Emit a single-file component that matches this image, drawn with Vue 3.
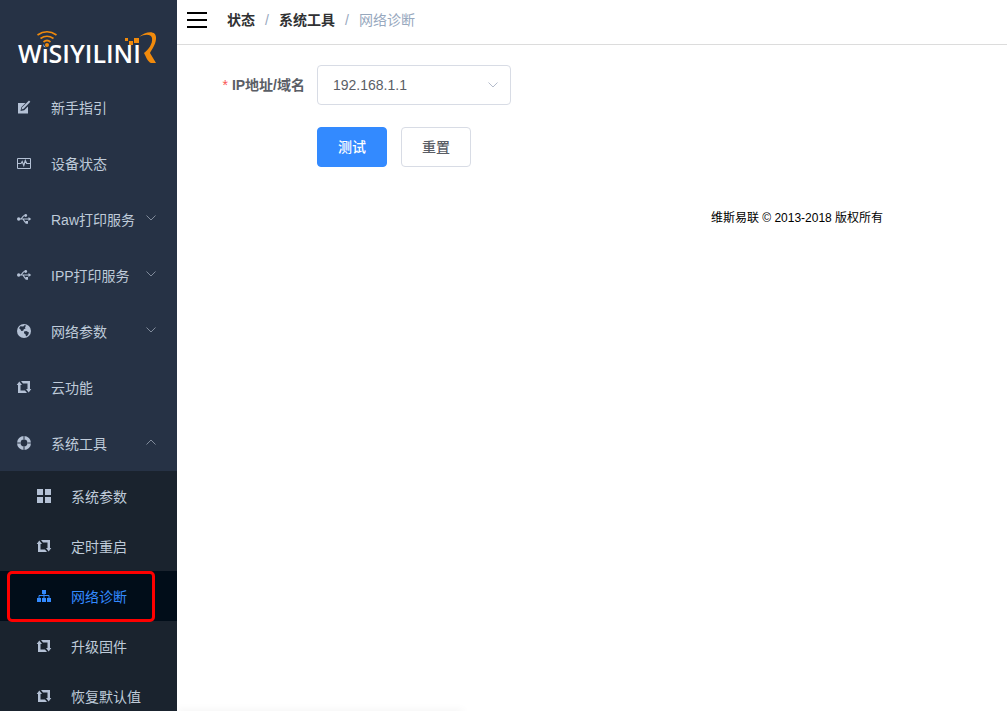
<script setup>
import { ref } from 'vue'

const menu = [
  { label: '新手指引', icon: 'edit' },
  { label: '设备状态', icon: 'monitor' },
  { label: 'Raw打印服务', icon: 'usb', arrow: 'down' },
  { label: 'IPP打印服务', icon: 'usb', arrow: 'down' },
  { label: '网络参数', icon: 'globe', arrow: 'down' },
  { label: '云功能', icon: 'loop' },
  {
    label: '系统工具',
    icon: 'ring',
    arrow: 'up',
    children: [
      { label: '系统参数', icon: 'grid' },
      { label: '定时重启', icon: 'loop' },
      { label: '网络诊断', icon: 'tree', active: true },
      { label: '升级固件', icon: 'loop' },
      { label: '恢复默认值', icon: 'loop' }
    ]
  }
]

const icons = {
  edit: '<path fill="currentColor" d="M1 3h7.500L4.300 7.300 3.500 11l3.700-.8L11 6.400V13.500H1z"/><path fill="currentColor" d="M12 .5l1.300 1.300-6.600 7-2.200.7.700-2.200z"/>',
  monitor: '<path fill="none" stroke="currentColor" stroke-width="1" d="M.5 2.500h13v10H.5z"/><path fill="none" stroke="currentColor" stroke-width="1.200" d="M1 7.500h3l1.200-2 1.600 4 1.500-5 1.400 3H13"/>',
  usb: '<circle cx="1.700" cy="7" r="1.700" fill="currentColor"/><path fill="none" stroke="currentColor" stroke-width="1.200" d="M2 7h10M3.500 7c1.700 0 1.800-3.500 4.300-3.500M5.500 7c1.500 0 1.500 3.500 3.500 3.500"/><path fill="currentColor" d="M11.500 5L14.200 7l-2.700 2zM8.500 9H11v2.700H8.500z"/><circle cx="8.700" cy="3.500" r="1.400" fill="currentColor"/>',
  globe: '<circle cx="7" cy="7" r="7" fill="currentColor"/><path class="cut" d="M3.300 2.300l3 .2 1-1.300 1.900.4L8 3.300l.5 1.200-1.700.7-.6 1.500-1.900.2L3.200 5 2 4.200zM7 7.600l2.300-.6 2.700 1.400-.7 2-1.500 1.900-.9-.2-.4-1.900L7 9.300z"/>',
  loop: '<path fill="currentColor" d="M4 1h9v8h1.300l-2.600 3.500L9 9h1.500V3.500H6zM10 13H1V5H-.3l2.600-3.500L5 5H3.500v5.500H8z"/>',
  ring: '<circle cx="7" cy="7" r="5.200" fill="none" stroke="currentColor" stroke-width="3.600"/><path class="slit" d="M7 0v3.500M7 10.500v4M0 7h3.500M10.500 7h4"/>',
  grid: '<path fill="currentColor" d="M0 0h6v6H0zM8 0h6v6H8zM0 8h6v6H0zM8 8h6v6H8z"/>',
  tree: '<path fill="currentColor" d="M5 1h4v4H5zM0 9h4v4H0zM5 9h4v4H5zM10 9h4v4h-4z"/><path fill="none" stroke="currentColor" d="M7 5v4M2 9V6.500h10V9"/>'
}

const address = ref('192.168.1.1')
</script>

<template>
  <div class="app">
    <aside class="side">
      <svg class="logo" viewBox="0 0 177 79" role="img" aria-label="WiSIYILINK">
        <text class="word" x="18" y="63">WiSIYILINI</text>
        <circle cx="47" cy="44.500" r="3" fill="#263245" />
        <g fill="none" stroke="#f08a0c" stroke-width="1.700">
          <path d="M37.500 35q9.500-6.500 19 0M40.500 38.500q6.500-4.500 13 0M43.500 42q3.500-3 7 0" />
        </g>
        <circle cx="47" cy="45" r="2" fill="#f08a0c" />
        <path fill="#f08a0c" d="M125 38h3v3h-3zM129 41h4v4h-4zM134 38h5v5h-5zM139 37C146 31 157 30 156 39c-.5 6-4 10-6 14l6 10h-5c-3-1-5-6-7-10 4-3 9-9 8-15-1-4-7-4-13-1z" />
      </svg>
      <nav>
        <ul>
          <li v-for="item in menu" :key="item.label">
            <a href="#" class="item">
              <svg class="icon" viewBox="0 0 14 14" aria-hidden="true" v-html="icons[item.icon]"></svg>
              <span>{{ item.label }}</span>
              <svg v-if="item.arrow" class="arrow" :class="item.arrow" viewBox="0 0 10 6" aria-hidden="true">
                <path d="M.5.500L5 5 9.500.500" />
              </svg>
            </a>
            <ul v-if="item.children" class="sub">
              <li v-for="child in item.children" :key="child.label">
                <a href="#" class="item" :class="{ active: child.active }">
                  <svg class="icon" viewBox="0 0 14 14" aria-hidden="true" v-html="icons[child.icon]"></svg>
                  <span>{{ child.label }}</span>
                </a>
              </li>
            </ul>
          </li>
        </ul>
      </nav>
    </aside>

    <div class="content">
      <header>
        <button class="toggle" type="button" aria-label="菜单"><i></i><i></i><i></i></button>
        <nav class="crumbs">
          <a href="#">状态</a><b>/</b><a href="#">系统工具</a><b>/</b><span>网络诊断</span>
        </nav>
      </header>
      <main>
        <form @submit.prevent>
          <label for="address"><em>*</em>IP地址/域名</label>
          <div class="field">
            <select id="address" v-model="address">
              <option>192.168.1.1</option>
            </select>
            <svg class="arrow" viewBox="0 0 10 6" aria-hidden="true"><path d="M.5.500L5 5 9.500.500" /></svg>
          </div>
          <div class="actions">
            <button type="submit" class="primary">测试</button>
            <button type="reset">重置</button>
          </div>
        </form>
      </main>
      <footer>维斯易联 © 2013-2018 版权所有</footer>
    </div>
    <div class="edge"></div>
  </div>
</template>

<style>
body {
  margin: 0;
  overflow: hidden;
}
.icon .cut {
  fill: #263245;
}
.icon .slit {
  stroke: #263245;
  stroke-width: 1;
}
</style>

<style scoped>
.app {
  display: flex;
  height: 100vh;
  overflow: hidden;
  background: #fff;
  font: 14px/20px "Liberation Sans", "Noto Sans CJK SC", sans-serif;
}
.side {
  flex: 0 0 177px;
  overflow: hidden;
  background: #263245;
}
.logo {
  display: block;
  width: 177px;
  height: 79px;
}
.word {
  font: 600 25px "Open Sans", sans-serif;
  fill: #fff;
}
ul {
  margin: 0;
  padding: 0;
  list-style: none;
}
.item {
  position: relative;
  display: flex;
  align-items: center;
  height: 56px;
  padding: 0 21px 0 17px;
  color: #bfcbd9;
  text-decoration: none;
  white-space: nowrap;
}
.item span {
  padding-top: 2px;
}
.icon {
  flex: none;
  width: 14px;
  height: 14px;
  margin-right: 20px;
  overflow: visible;
  color: #b4c1d5;
}
.arrow {
  flex: none;
  width: 10px;
  height: 6px;
  margin-left: auto;
  fill: none;
  stroke: #808b9b;
}
.item .arrow {
  margin-bottom: 2px;
}
.arrow.up {
  transform: rotate(180deg);
}
.sub {
  background: #1a232e;
}
.sub .item {
  height: 50px;
  padding-left: 37px;
}
.sub .active {
  background: #010d19;
  color: #338aff;
}
.active .icon {
  color: #338aff;
}
.active::after {
  content: "";
  position: absolute;
  inset: 0 22px -1px 7px;
  border: 3px solid #fe0000;
  border-radius: 5px;
  z-index: 1;
}
.content {
  flex: 1;
  min-width: 0;
}
header {
  display: flex;
  align-items: flex-start;
  gap: 20px;
  height: 44px;
  padding: 0 10px;
  border-bottom: 1px solid #dcdcdc;
}
.toggle {
  display: flex;
  flex-direction: column;
  justify-content: center;
  gap: 5px;
  width: 20px;
  height: 40px;
  padding: 0;
  border: 0;
  background: none;
}
.toggle i {
  height: 2px;
  background: #000;
}
.crumbs {
  display: flex;
  line-height: 40px;
  color: #97a8be;
}
.crumbs a {
  color: #303133;
  font-weight: bold;
  text-decoration: none;
}
.crumbs b {
  width: 4px;
  margin: 0 10px;
  font-weight: normal;
}
form {
  display: grid;
  grid-template-columns: 128px 194px;
  column-gap: 12px;
  row-gap: 22px;
  padding: 20px 0 0;
}
label {
  line-height: 40px;
  color: #5a5e66;
  font-weight: bold;
  text-align: right;
  white-space: nowrap;
}
em {
  margin-right: 4px;
  color: #fa5555;
  font-style: normal;
  font-weight: normal;
}
.field {
  display: grid;
  align-items: center;
}
.field > * {
  grid-area: 1 / 1;
}
select {
  appearance: none;
  width: 100%;
  height: 40px;
  padding: 0 15px;
  border: 1px solid #d8dce5;
  border-radius: 4px;
  background: #fff;
  color: #5a5e66;
  font: inherit;
}
.field .arrow {
  justify-self: end;
  margin-right: 13px;
  stroke: #b4bccc;
  pointer-events: none;
}
.actions {
  grid-column: 2;
  display: flex;
  gap: 14px;
}
.actions button {
  width: 70px;
  height: 40px;
  padding: 0;
  border: 1px solid #d8dce5;
  border-radius: 4px;
  background: #fff;
  color: #5a5e66;
  font: inherit;
  font-weight: 500;
}
.actions .primary {
  border-color: #338aff;
  background: #338aff;
  color: #fff;
}
footer {
  margin: 41px 5px 0 50%;
  color: #000;
  font-size: 12px;
  text-align: center;
}
.edge {
  position: fixed;
  bottom: -4px;
  left: 177px;
  width: 286px;
  height: 4px;
  box-shadow: 0 0 8px #00000014;
  clip-path: inset(-12px -12px 0 0);
}
</style>
